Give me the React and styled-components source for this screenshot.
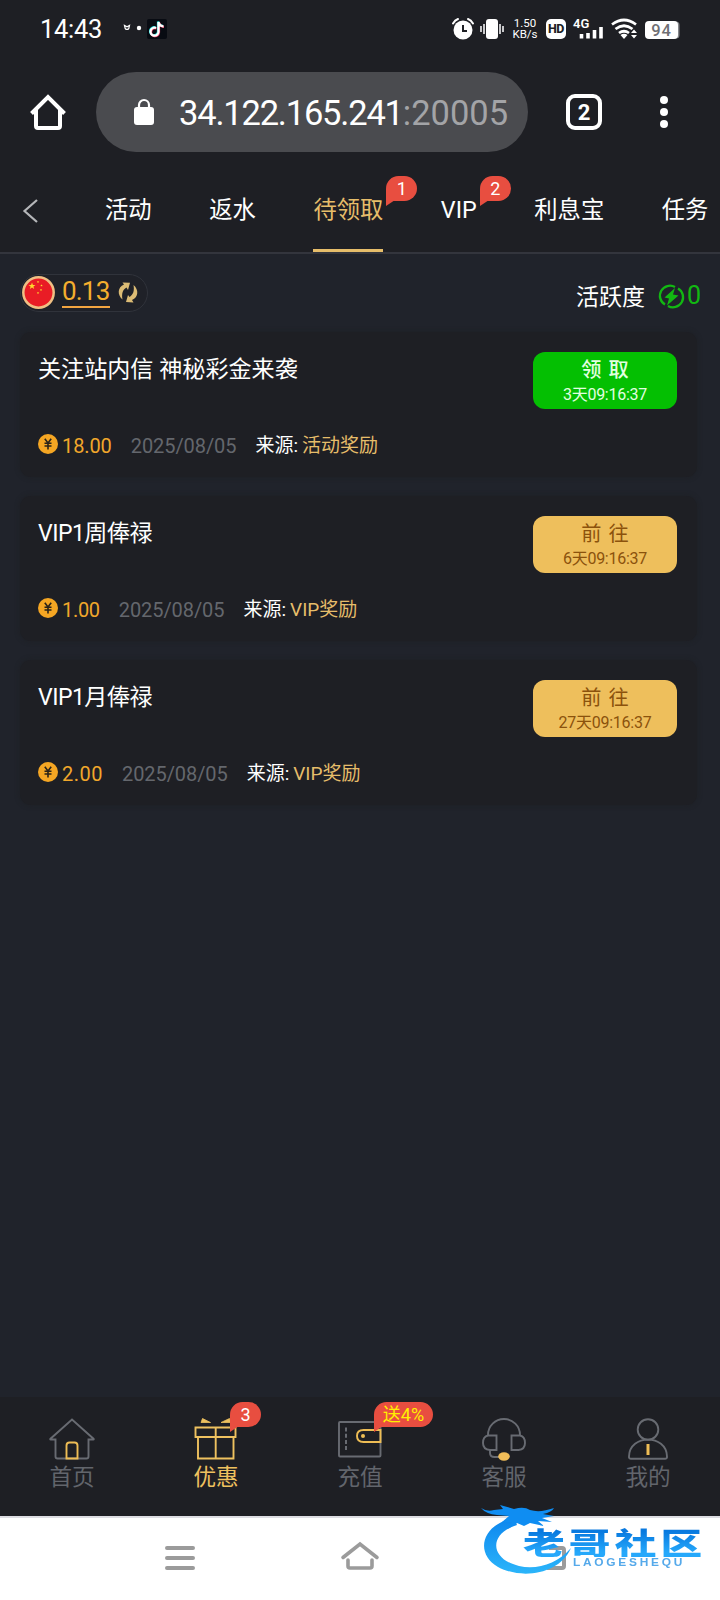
import React from "react";
import styled, { createGlobalStyle } from "styled-components";

const Global = createGlobalStyle`
  * { box-sizing: border-box; }
  body { margin: 0; background: #20232b; }
  body, button { font-family: Roboto, "Noto Sans CJK SC", sans-serif; }
  svg { display: block; flex: none; overflow: visible; }
`;

const Screen = styled.div`
  position: relative;
  width: 720px;
  height: 1600px;
  display: flex;
  flex-direction: column;
  background: #20232b;
  color: #fff;
  overflow: hidden;
  white-space: nowrap;
`;

/* ---------- status bar ---------- */
const StatusBar = styled.div`
  height: 72px;
  padding: 0 39px 15px 40px;
  display: flex;
  align-items: center;
  justify-content: space-between;
  background: #1e1f24;
`;
const StatusGroup = styled.div`
  display: flex;
  align-items: center;
`;
const Clock = styled.span`
  font-size: 25.5px;
  line-height: 30px;
  width: 84px;
  letter-spacing: -0.3px;
`;
const Speed = styled.div`
  width: 26px;
  margin: 0 8px 0 8px;
  display: flex;
  flex-direction: column;
  align-items: center;
  font-size: 11.5px;
  line-height: 11px;
  font-weight: 400;
`;
const HdBadge = styled.div`
  width: 20px;
  height: 20px;
  border-radius: 5px;
  background: #fff;
  color: #1e1f24;
  font-size: 12.5px;
  font-weight: 800;
  line-height: 20px;
  text-align: center;
  letter-spacing: -0.4px;
`;
const Battery = styled.div`
  width: 33px;
  height: 18px;
  margin: 2px 3px 0 6px;
  border-radius: 4px;
  background: #fff;
  color: #6f7074;
  font-size: 16.5px;
  line-height: 19.5px;
  font-weight: 500;
  text-align: center;
  letter-spacing: 0.8px;
  box-shadow: 2px 0 0 -0.5px #85868a;
`;

/* ---------- browser bar ---------- */
const BrowserBar = styled.div`
  height: 96px;
  padding: 0 49px 16px 30px;
  display: flex;
  align-items: center;
  background: #1e1f24;
`;
const Address = styled.div`
  width: 432px;
  height: 80px;
  margin: 0 38px 0 30px;
  padding-left: 38px;
  border-radius: 40px;
  background: #4a4b4f;
  display: flex;
  align-items: center;
`;
const Url = styled.div`
  width: 332px;
  margin-left: 25px;
  font-size: 34.5px;
  line-height: 44px;
  letter-spacing: -1.2px;
  padding-top: 2px;
  color: #fff;
`;
const Port = styled.span`
  color: #a3a4a7;
  letter-spacing: 0px;
`;
const TabCount = styled.div`
  width: 36px;
  height: 36px;
  margin-right: 58px;
  border: 4px solid #fff;
  border-radius: 9px;
  font-size: 22px;
  font-weight: 700;
  line-height: 29px;
  text-align: center;
`;

/* ---------- page tabs ---------- */
const TabBar = styled.nav`
  height: 86px;
  padding-left: 23px;
  display: flex;
  background: #1e1f24;
  border-bottom: 2px solid #33353d;
`;
const BackButton = styled.div`
  width: 82px;
  padding-top: 31px;
`;
const TabList = styled.div`
  display: flex;
  gap: 57.6px;
`;
const Tab = styled.div`
  position: relative;
  height: 84px;
  padding-top: 25px;
  font-size: 23.3px;
  line-height: 35px;
  color: ${(p) => (p.$active ? "#e6bd6a" : "#fff")};
  border-bottom: 3px solid ${(p) => (p.$active ? "#e6bd6a" : "transparent")};
`;
const Bubble = styled.span`
  position: absolute;
  left: ${(p) => p.$left};
  top: ${(p) => p.$top};
  min-width: ${(p) => p.$width || 31}px;
  height: 25px;
  border-radius: 13px 13px 13px 0;
  background: #e84e40;
  color: ${(p) => p.$color || "#fff"};
  font-size: 18px;
  line-height: 26px;
  text-align: center;
  &::after {
    content: "";
    position: absolute;
    left: 0;
    top: 24px;
    border-top: 6px solid #e84e40;
    border-right: 9px solid transparent;
  }
`;

/* ---------- balance ---------- */
const Summary = styled.div`
  height: 78px;
  padding: 20px 19px 0 20px;
  display: flex;
  align-items: flex-start;
  justify-content: space-between;
`;
const Wallet = styled.div`
  width: 128px;
  height: 38px;
  padding: 0 0 1px 1px;
  border: 1px solid #30333b;
  border-radius: 19px;
  background: #1f2128;
  display: flex;
  align-items: center;
`;
const Amount = styled.span`
  width: 48px;
  height: 29px;
  margin: 1px 8px 0 7px;
  border-bottom: 2px solid #f2a541;
  color: #f4ae2e;
  font-size: 26px;
  line-height: 25px;
  letter-spacing: -0.8px;
`;
const Activity = styled.div`
  display: flex;
  align-items: center;
  margin-top: 7px;
  font-size: 23px;
  line-height: 34px;
  svg { margin: -4px 4px 0 15px; }
`;
const Score = styled.span`
  color: #12b812;
  font-size: 25px;
  margin-top: -4px;
`;

/* ---------- reward cards ---------- */
const CardList = styled.main`
  flex: 1;
  padding: 0 23px 0 20px;
  display: flex;
  flex-direction: column;
  gap: 19px;
`;
const Card = styled.section`
  height: 145px;
  padding: 20px 20px 0 18px;
  border-radius: 11px;
  background: #1e1f24;
  box-shadow: 0 0 5px #1e2024;
`;
const CardTop = styled.div`
  height: 78px;
  display: flex;
  align-items: flex-start;
  justify-content: space-between;
`;
const CardTitle = styled.h2`
  margin: 1px 0 0;
  font-size: 23.1px;
  font-weight: 400;
  line-height: 33px;
  letter-spacing: ${(p) => (p.$latin ? "-0.55px" : "0")};
`;
const ActionButton = styled.button`
  width: 144px;
  height: 57px;
  padding: 3px 0 0;
  border: 0;
  border-radius: 12px;
  background: ${(p) => (p.$claim ? "#04bf02" : "#eebf5c")};
  color: ${(p) => (p.$claim ? "#e2ffe0" : "#8b520c")};
  display: flex;
  flex-direction: column;
  align-items: center;
`;
const ActionLabel = styled.span`
  font-size: 20.2px;
  font-weight: ${(p) => (p.$bold ? 500 : 400)};
  line-height: 31px;
  word-spacing: 2px;
`;
const Countdown = styled.span`
  font-size: 16px;
  line-height: 17px;
  letter-spacing: -0.25px;
`;
const CardMeta = styled.div`
  display: flex;
  align-items: center;
  font-size: 19px;
  line-height: 32px;
`;
const Money = styled.span`
  margin: 0 19px 0 4px;
  color: #f1a72b;
  font-size: 20px;
  letter-spacing: ${(p) => p.$spacing}px;
`;
const DateText = styled.span`
  margin-right: 19px;
  color: #64676d;
  font-size: 20px;
  letter-spacing: -0.08px;
`;
const Source = styled.span`
  margin-left: 4px;
  color: #e6bd6a;
`;

/* ---------- bottom navigation ---------- */
const BottomNav = styled.nav`
  height: 121px;
  display: grid;
  grid-template-columns: repeat(5, 144px);
  background: #1e1f24;
  border-bottom: 2px solid #dddde2;
`;
const NavItem = styled.div`
  position: relative;
  display: flex;
  flex-direction: column;
  align-items: center;
  padding-top: 21px;
  font-size: 22.6px;
  line-height: 33px;
  color: ${(p) => (p.$active ? "#eec15f" : "#62656c")};
`;
const SystemBar = styled.div`
  height: 82px;
  padding: 28px 154px 0 165px;
  display: flex;
  background: #fff;
`;
const HomeKey = styled.svg`
  margin: -4px 163px 0 146px;
`;

/* ---------- community stamp ---------- */
const Stamp = styled.div`
  position: absolute;
  left: 480px;
  top: 1498px;
  width: 226px;
  height: 80px;
`;
const StampArt = styled.svg`
  position: absolute;
  inset: 0;
`;
const StampName = styled.div`
  position: absolute;
  left: 43px;
  top: 27px;
  font-family: "Noto Sans CJK SC", sans-serif;
  font-size: 30px;
  line-height: 32px;
  font-weight: 900;
  letter-spacing: 3px;
  transform: scaleX(1.39);
  transform-origin: 0 0;
  background: linear-gradient(#0879df 20%, #25a8fb 85%);
  background-clip: text;
  color: transparent;
`;
const StampLatin = styled.div`
  position: absolute;
  left: 93px;
  top: 59px;
  font: 700 10px/12px "Liberation Sans", sans-serif;
  letter-spacing: 2.3px;
  transform: scaleX(1.19);
  transform-origin: 0 0;
  color: #55a9ea;
`;

const CoinIcon = styled.svg`
  margin-top: -4px;
`;
const Coin = () => (
  <CoinIcon width="20" height="20" viewBox="0 0 20 20">
    <circle cx="10" cy="10" r="10" fill="#f5a623" />
    <path d="M6.8 4.8 10 9l3.2-4.2M10 9v6.5M6.5 9.300h7M6.500 12h7" fill="none" stroke="#2a2319" strokeWidth="1.6" />
  </CoinIcon>
);

const rewards = [
  { title: "关注站内信 神秘彩金来袭", money: "18.00", spacing: -0.1, source: "活动奖励", action: "领 取", left: "3天09:16:37", claim: true },
  { title: "VIP1周俸禄", latin: true, money: "1.00", spacing: -0.3, source: "VIP奖励", action: "前 往", left: "6天09:16:37" },
  { title: "VIP1月俸禄", latin: true, money: "2.00", spacing: 0.5, source: "VIP奖励", action: "前 往", left: "27天09:16:37" },
];

const tabs = [
  { name: "活动" },
  { name: "返水" },
  { name: "待领取", active: true, count: 1 },
  { name: "VIP", count: 2 },
  { name: "利息宝" },
  { name: "任务" },
];

const star = "M0-3.6.9-1.1 3.5-1.1 1.4.5 2.2 3 0 1.5-2.2 3-1.4.5-3.5-1.1-.9-1.1Z";

const navItems = [
  {
    name: "首页",
    icon: (
      <>
        <path d="M6.5 21.500H1.700Q.8 21.500 1.500 20.700L23 1.500 44.500 20.700Q45.200 21.500 44.300 21.500H39.500V38.500Q39.500 40.500 37.500 40.500H8.500Q6.500 40.500 6.500 38.500Z" />
        <path d="M17.500 40.500V27.500Q17.500 24.500 20.500 24.500H25.500Q28.500 24.500 28.500 27.500V40.500Z" stroke="#eebd55" />
      </>
    ),
  },
  {
    name: "优惠",
    active: true,
    badge: "3",
    icon: (
      <>
        <path d="M2.500 9.500H42.500V19H2.500ZM5 19H40.500V40.500H5ZM22.700 10V40.500" />
        <path d="M8 4.500 9.500 .5 17.500 4.500ZM28 4.500 36.500 .5 37.500 4.500Z" fill="#eec15f" strokeWidth="0.800" />
      </>
    ),
  },
  {
    name: "充值",
    badge: "送4%",
    badgeColor: "#fff000",
    icon: (
      <>
        <rect x="2" y="4" width="41.500" height="34.500" rx="1" />
        <path d="M9 9.500V33" strokeDasharray="4 2.200" strokeWidth="2" />
        <path d="M43.500 12H26.500Q20 12 20 18T26.500 24H43.500Z" stroke="#eebd55" />
        <circle cx="26" cy="18" r="2" fill="#eebd55" stroke="none" />
      </>
    ),
  },
  {
    name: "客服",
    icon: (
      <>
        <path d="M7 17.500V17A16 16 0 0 1 39 17V17.500M9 32V35Q9 39 13.500 39H18" />
        <path d="M7 17.500H15.500V32H9Q2 31.500 2 25T7 17.500ZM30.500 17.500H39Q44 18.500 44 25T37.500 32H30.500Z" />
        <ellipse cx="23" cy="38.500" rx="5.800" ry="4.200" fill="#f1bd58" stroke="none" />
      </>
    ),
  },
  {
    name: "我的",
    icon: (
      <>
        <circle cx="23" cy="11.500" r="10.300" />
        <path d="M4 38.500C4.500 16 41.500 16 42 38.500Q42.200 40.800 40 40.800H6Q3.800 40.800 4 38.500Z" />
        <path d="M23 26V37" stroke="#eebd55" strokeWidth="3" />
      </>
    ),
  },
];

export default function App() {
  return (
    <Screen>
      <Global />
      <StatusBar>
        <StatusGroup>
          <Clock>14:43</Clock>
          <svg width="43" height="20" viewBox="0 0 43 20">
            <path d="M.5 6.500 1.200 9.500Q3 11.500 4.800 9.500L5.500 6.500 3 7.800Z" fill="none" stroke="#fff" strokeWidth="1.200" />
            <circle cx="15" cy="9" r="2.200" fill="#fff" />
            <rect x="23" width="20" height="20" rx="2" fill="#080b12" />
            <g fill="none" strokeWidth="2.200">
              <path d="M31.500 8.500A4 4 0 1 0 34 12.500V2.500Q35 6.500 39 6.800" stroke="#25e5e0" />
              <path d="M32.500 9.500A4 4 0 1 0 35 13.500V3.500Q36 7.500 40 7.800" stroke="#f24068" />
              <path d="M32 9A4 4 0 1 0 34.500 13V3Q35.500 7 39.500 7.300" stroke="#fff" />
            </g>
          </svg>
        </StatusGroup>
        <StatusGroup>
          <svg width="22" height="22" viewBox="0 0 22 22">
            <circle cx="11" cy="12" r="9.500" fill="#fff" />
            <path d="M1 5.500Q3 2 6 1M21 5.500Q19 2 16 1" fill="none" stroke="#fff" strokeWidth="2" strokeLinecap="round" />
            <path d="M11 7V13H15" fill="none" stroke="#1e1f24" strokeWidth="2" />
          </svg>
          <svg width="30" height="20" viewBox="-6 0 30 20">
            <rect x="6" width="12" height="20" rx="3" fill="#fff" />
            <path d="M4 5V15M1 7V13M20 5V15M23 7V13" stroke="#fff" strokeWidth="1.500" />
          </svg>
          <Speed>
            <span>1.50</span>
            <span>KB/s</span>
          </Speed>
          <HdBadge>HD</HdBadge>
          <svg width="38" height="22" viewBox="-7 0 38 22">
            <text x="0" y="10" fill="#fff" fontSize="13" fontWeight="600">4G</text>
            <path d="M8.500 16V20.500M15 15V20.500M21.500 12V20.500M28 9V20.500" stroke="#fff" strokeWidth="3.600" />
          </svg>
          <svg width="35" height="20" viewBox="-7 0 35 20">
            <path d="M1 5.500Q13 -3.500 25 5.500M4.500 10Q13 3.500 21.500 10M8 14Q13 10.500 18 14" fill="none" stroke="#fff" strokeWidth="2.700" />
            <path d="M9.500 16Q13 13.500 16.500 16L13 20Z" fill="#fff" />
            <path d="M20 14 23 10.500 26 14ZM20 16 23 19.500 26 16Z" fill="#fff" />
          </svg>
          <Battery>94</Battery>
        </StatusGroup>
      </StatusBar>

      <BrowserBar>
        <svg width="36" height="36" viewBox="0 0 36 36" fill="none" stroke="#fff" strokeWidth="4">
          <path d="M1.500 19.500 18 3 34.500 19.500M6 16V32Q6 34 8 34H28Q30 34 30 32V16" />
        </svg>
        <Address>
          <svg width="20" height="26" viewBox="0 0 20 26">
            <rect y="8" width="20" height="18" rx="3" fill="#fff" />
            <path d="M5 9V6A5 5 0 0 1 15 6V9" fill="none" stroke="#fff" strokeWidth="2.200" />
          </svg>
          <Url>34.122.165.241<Port>:20005</Port></Url>
        </Address>
        <TabCount>2</TabCount>
        <svg width="8" height="32" viewBox="0 0 8 32" fill="#fff">
          <circle cx="4" cy="4" r="4" />
          <circle cx="4" cy="16" r="4" />
          <circle cx="4" cy="28" r="4" />
        </svg>
      </BrowserBar>

      <TabBar>
        <BackButton>
          <svg width="15" height="24" viewBox="0 0 15 24">
            <path d="M14 1 1.500 12 14 23" fill="none" stroke="#b5b6b9" strokeWidth="2.200" />
          </svg>
        </BackButton>
        <TabList>
          {tabs.map((t) => (
            <Tab key={t.name} $active={t.active}>
              {t.name}
              {t.count && <Bubble $left="calc(100% + 3px)" $top="8px">{t.count}</Bubble>}
            </Tab>
          ))}
        </TabList>
      </TabBar>

      <Summary>
        <Wallet>
          <svg width="33" height="33" viewBox="0 0 33 33">
            <circle cx="16.500" cy="16.500" r="15.200" fill="#e91c25" stroke="#f0bf83" strokeWidth="2.500" />
            <g fill="#ffd92e">
              <path d={star} transform="translate(10 10)" />
              <path d={star} transform="translate(16 6) scale(.35)" />
              <path d={star} transform="translate(19.500 9.500) scale(.35)" />
              <path d={star} transform="translate(19 14) scale(.35)" />
              <path d={star} transform="translate(16 17) scale(.35)" />
            </g>
          </svg>
          <Amount>0.13</Amount>
          <svg width="20" height="21" viewBox="0 0 20 21" fill="#dcbc75">
            <path d="M4.500 17.500C-1 13-.5 5 6 2.500L4.500.5 12 .8 10 8 8.500 5.600C4.500 8 3.500 12 4.500 17.500Z" />
            <path d="M15.500 3C21 7.500 20.500 15.500 14 18L15.500 20.500 8 20 10 13 11.500 15C15.500 12.500 16.500 8.500 15.500 3Z" />
          </svg>
        </Wallet>
        <Activity>
          活跃度
          <svg width="23" height="23" viewBox="0 0 23 23">
            <path d="M15 2A10 10 0 0 0 5 19.500M8 21A10 10 0 0 0 18 3.500" fill="none" stroke="#12b812" strokeWidth="2.300" />
            <path d="M15 3 4.500 12.500 9 13.500 7 20.500 18.500 10.500 13 9.500Z" fill="#12b812" />
          </svg>
          <Score>0</Score>
        </Activity>
      </Summary>

      <CardList>
        {rewards.map((r) => (
          <Card key={r.title}>
            <CardTop>
              <CardTitle $latin={r.latin}>{r.title}</CardTitle>
              <ActionButton $claim={r.claim}>
                <ActionLabel $bold={r.claim}>{r.action}</ActionLabel>
                <Countdown>{r.left}</Countdown>
              </ActionButton>
            </CardTop>
            <CardMeta>
              <Coin />
              <Money $spacing={r.spacing}>{r.money}</Money>
              <DateText>2025/08/05</DateText>
              来源:<Source>{r.source}</Source>
            </CardMeta>
          </Card>
        ))}
      </CardList>

      <BottomNav>
        {navItems.map((n) => (
          <NavItem key={n.name} $active={n.active}>
            <svg width="46" height="43" viewBox="0 0 46 43" fill="none" stroke={n.active ? "#eec15f" : "#686b72"} strokeWidth="1.900">
              {n.icon}
            </svg>
            {n.name}
            {n.badge && (
              <Bubble $left="86px" $top="5px" $width={n.badge === "3" ? 31 : 59} $color={n.badgeColor}>
                {n.badge}
              </Bubble>
            )}
          </NavItem>
        ))}
      </BottomNav>

      <SystemBar>
        <svg width="30" height="24" viewBox="0 0 30 24" stroke="#9b9b9b" strokeWidth="4" strokeLinecap="round">
          <path d="M2 2H28M2 12H28M2 22H28" />
        </svg>
        <HomeKey width="38" height="28" viewBox="0 0 38 28" fill="none" stroke="#9b9b9b" strokeWidth="3.600" strokeLinecap="round">
          <path d="M2 15.500 19 2 36 15.500M7 18V24Q7 26 9 26H29Q31 26 31 24V18" />
        </HomeKey>
        <svg width="24" height="24" viewBox="0 0 24 24" fill="none" stroke="#9b9b9b" strokeWidth="4">
          <path d="M7 2H20Q22 2 22 4V20Q22 22 20 22H5" />
        </svg>
      </SystemBar>

      <Stamp>
        <StampArt width="226" height="80" viewBox="0 0 226 80">
          <defs>
            <linearGradient id="wave" x2="0" y2="1">
              <stop stopColor="#0d86ee" />
              <stop offset="1" stopColor="#2bb5fa" />
            </linearGradient>
          </defs>
          <path d="M34 20C2 26-6 55 18 69 42 82 80 76 91 50 77 66 57 72 39 68 10 61 8 36 37 27Z" fill="url(#wave)" />
          <path d="M1 10Q7 14 14 12L23 11 20 7 34 11Q44 8 50 12 60 15 74 10 72 14 63 16L74 18 62 20 72 24 58 23 64 28 50 25 44 28 37 25 28 31 32 24 22 24 29 18 17 17Q6 16 1 10Z" fill="#0f8df2" />
        </StampArt>
        <StampName>老哥社区</StampName>
        <StampLatin>LAOGESHEQU</StampLatin>
      </Stamp>
    </Screen>
  );
}
